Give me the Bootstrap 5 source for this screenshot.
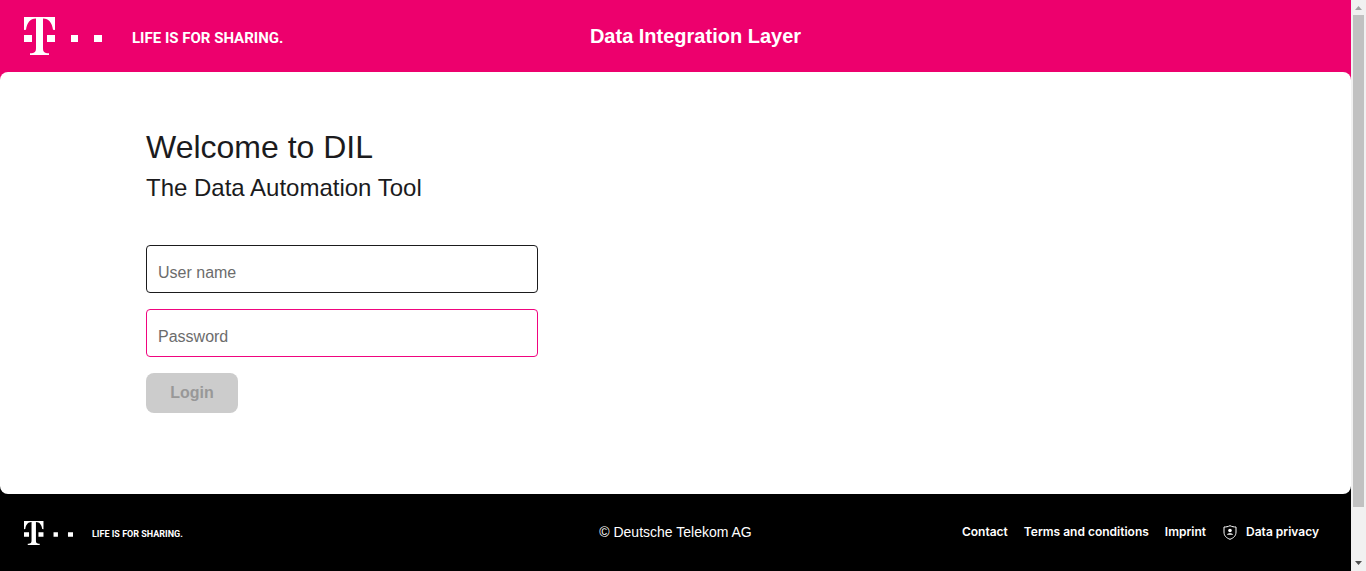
<!DOCTYPE html>
<html lang="en">
<head>
<meta charset="utf-8">
<meta name="viewport" content="width=device-width, initial-scale=1">
<title>Data Integration Layer</title>
<link href="https://cdn.jsdelivr.net/npm/bootstrap@5.3.0/dist/css/bootstrap.min.css" rel="stylesheet">
<style>
  :root { --brand: #ed006d; --ink: #1b1b1d; }
  body { font-family: "Liberation Sans", Arial, sans-serif; color: var(--ink); background: #000; }
  .header-grid, .footer-grid { display: grid; grid-template-columns: 1fr auto 1fr; align-items: center; }
  .header-grid { background: var(--brand); height: 72px; padding: 0 24px; }
  .app-title { font-size: 20px; line-height: 24px; padding-left: 40px; }
  .slogan { font-family: Roboto, sans-serif; font-weight: 700; white-space: nowrap; }
  .slogan-lg { font-size: 15px; line-height: 20px; padding-top: 3px; }
  .slogan-sm { font-size: 9px; line-height: 12px; padding-top: 2px; }
  .brand-lg { gap: 30px; }
  .brand-sm { gap: 19px; padding-top: 2px; }
  .sheet-back { background: linear-gradient(var(--brand) 50%, #000 50%); }
  .sheet { background: #fff; border-radius: 8px; padding: 56px 0 81px; }
  .sheet-inner { max-width: 1059px; }
  .sheet h1 { font-size: 32px; line-height: 38px; }
  .sheet h2 { font-size: 24px; line-height: 36px; }
  .login-form { max-width: 392px; gap: 16px; margin-top: 39px; }
  .login-form .form-control { height: 48px; padding: 17px 11px 9px; font-size: 16px; line-height: 20px; border: 1px solid #1b1b1d; border-radius: 4px; color: var(--ink); }
  .login-form .form-control::placeholder { color: #6c6c6c; }
  .login-form .field-alert { border-color: #f0047f; }
  .login-btn, .login-btn:disabled { width: 92px; height: 40px; padding: 0; border: 0; border-radius: 8px; font-size: 16px; line-height: 20px; font-weight: 700; background: #ccc; color: #989898; opacity: 1; }
  .footer-grid { background: #000; color: #fff; padding: 24px; }
  .copyright { font-size: 14px; line-height: 20px; }
  .footer-links { gap: 16px; }
  .footer-links a { font: 600 12px/16px Inter, sans-serif; color: #fff; text-decoration: none; white-space: nowrap; }
  .scroll-rail { width: 15px; height: 100vh; background: #f1f1f1; top: 0; }
  .scroll-thumb { width: 11px; height: 492px; background: #c1c1c1; }
  .scroll-rail svg { height: 15px; }
</style>
</head>
<body>
<svg class="d-none" aria-hidden="true">
  <symbol id="t-logo" viewBox="0 0 78 38">
    <path d="M0 18h8v7H0zM23 18h8v7h-8zM47 18h7v7h-7zM70 18h8v7h-8z"/>
    <path d="M0 0h31v13l-2-.3C28 6 25 1.600 19 1.600V31c0 4 1 5 6 5.300V38H6v-1.700c5-.3 6-1.300 6-5.300V1.600C6 1.600 3 6 2 12.700L0 13z"/>
  </symbol>
</svg>
<div class="d-flex align-items-start">
  <div class="flex-grow-1">
    <header class="header-grid text-white">
      <a href="#" class="brand-lg d-flex align-items-center text-white text-decoration-none">
        <svg width="78" height="38" fill="currentColor" aria-hidden="true"><use href="#t-logo"/></svg>
        <span class="slogan slogan-lg">LIFE IS FOR SHARING.</span>
      </a>
      <div class="app-title fw-bold">Data Integration Layer</div>
    </header>
    <div class="sheet-back">
      <main class="sheet">
        <div class="sheet-inner mx-auto">
          <h1 class="fw-normal mb-1">Welcome to DIL</h1>
          <h2 class="fw-normal mb-0">The Data Automation Tool</h2>
          <form class="login-form d-flex flex-column align-items-start">
            <input class="form-control" type="text" placeholder="User name" aria-label="User name">
            <input class="form-control field-alert" type="password" placeholder="Password" aria-label="Password">
            <button class="btn login-btn" type="submit" disabled>Login</button>
          </form>
        </div>
      </main>
    </div>
    <footer class="footer-grid">
      <a href="#" class="brand-sm d-flex align-items-center text-white text-decoration-none">
        <svg width="49" height="26" viewBox="0 0 78 38" fill="currentColor" aria-hidden="true"><use href="#t-logo"/></svg>
        <span class="slogan slogan-sm">LIFE IS FOR SHARING.</span>
      </a>
      <div class="copyright">© Deutsche Telekom AG</div>
      <nav class="footer-links d-flex justify-content-end align-items-center pe-2" aria-label="Footer">
        <a href="#">Contact</a>
        <a href="#">Terms and conditions</a>
        <a href="#">Imprint</a>
        <a href="#" class="d-flex align-items-center gap-2">
          <svg width="16" height="16" viewBox="0 0 16 16" fill="none" stroke="#fff" aria-hidden="true">
            <path d="M8 1.700c2 1 4 1.300 6 1.300v5c0 4-2.500 6-6 7.300C4.500 14 2 12 2 8V3c2 0 4-.3 6-1.300z"/>
            <circle cx="8" cy="6.500" r="1.800" fill="#fff" stroke="none"/>
            <path d="M5 10.800c.3-2 5.700-2 6 0z" fill="#fff" stroke="none"/>
          </svg>
          Data privacy
        </a>
      </nav>
    </footer>
  </div>
  <div class="scroll-rail sticky-top flex-shrink-0 d-flex flex-column align-items-center" aria-hidden="true">
    <svg width="15" height="15"><path d="M4 10h7L7.500 6z" fill="#a3a3a3"/></svg>
    <div class="scroll-thumb"></div>
    <svg class="mt-auto" width="15" height="15"><path d="M4 5h7L7.500 9z" fill="#505050"/></svg>
  </div>
</div>
<script src="https://cdn.jsdelivr.net/npm/bootstrap@5.3.0/dist/js/bootstrap.bundle.min.js"></script>
</body>
</html>
